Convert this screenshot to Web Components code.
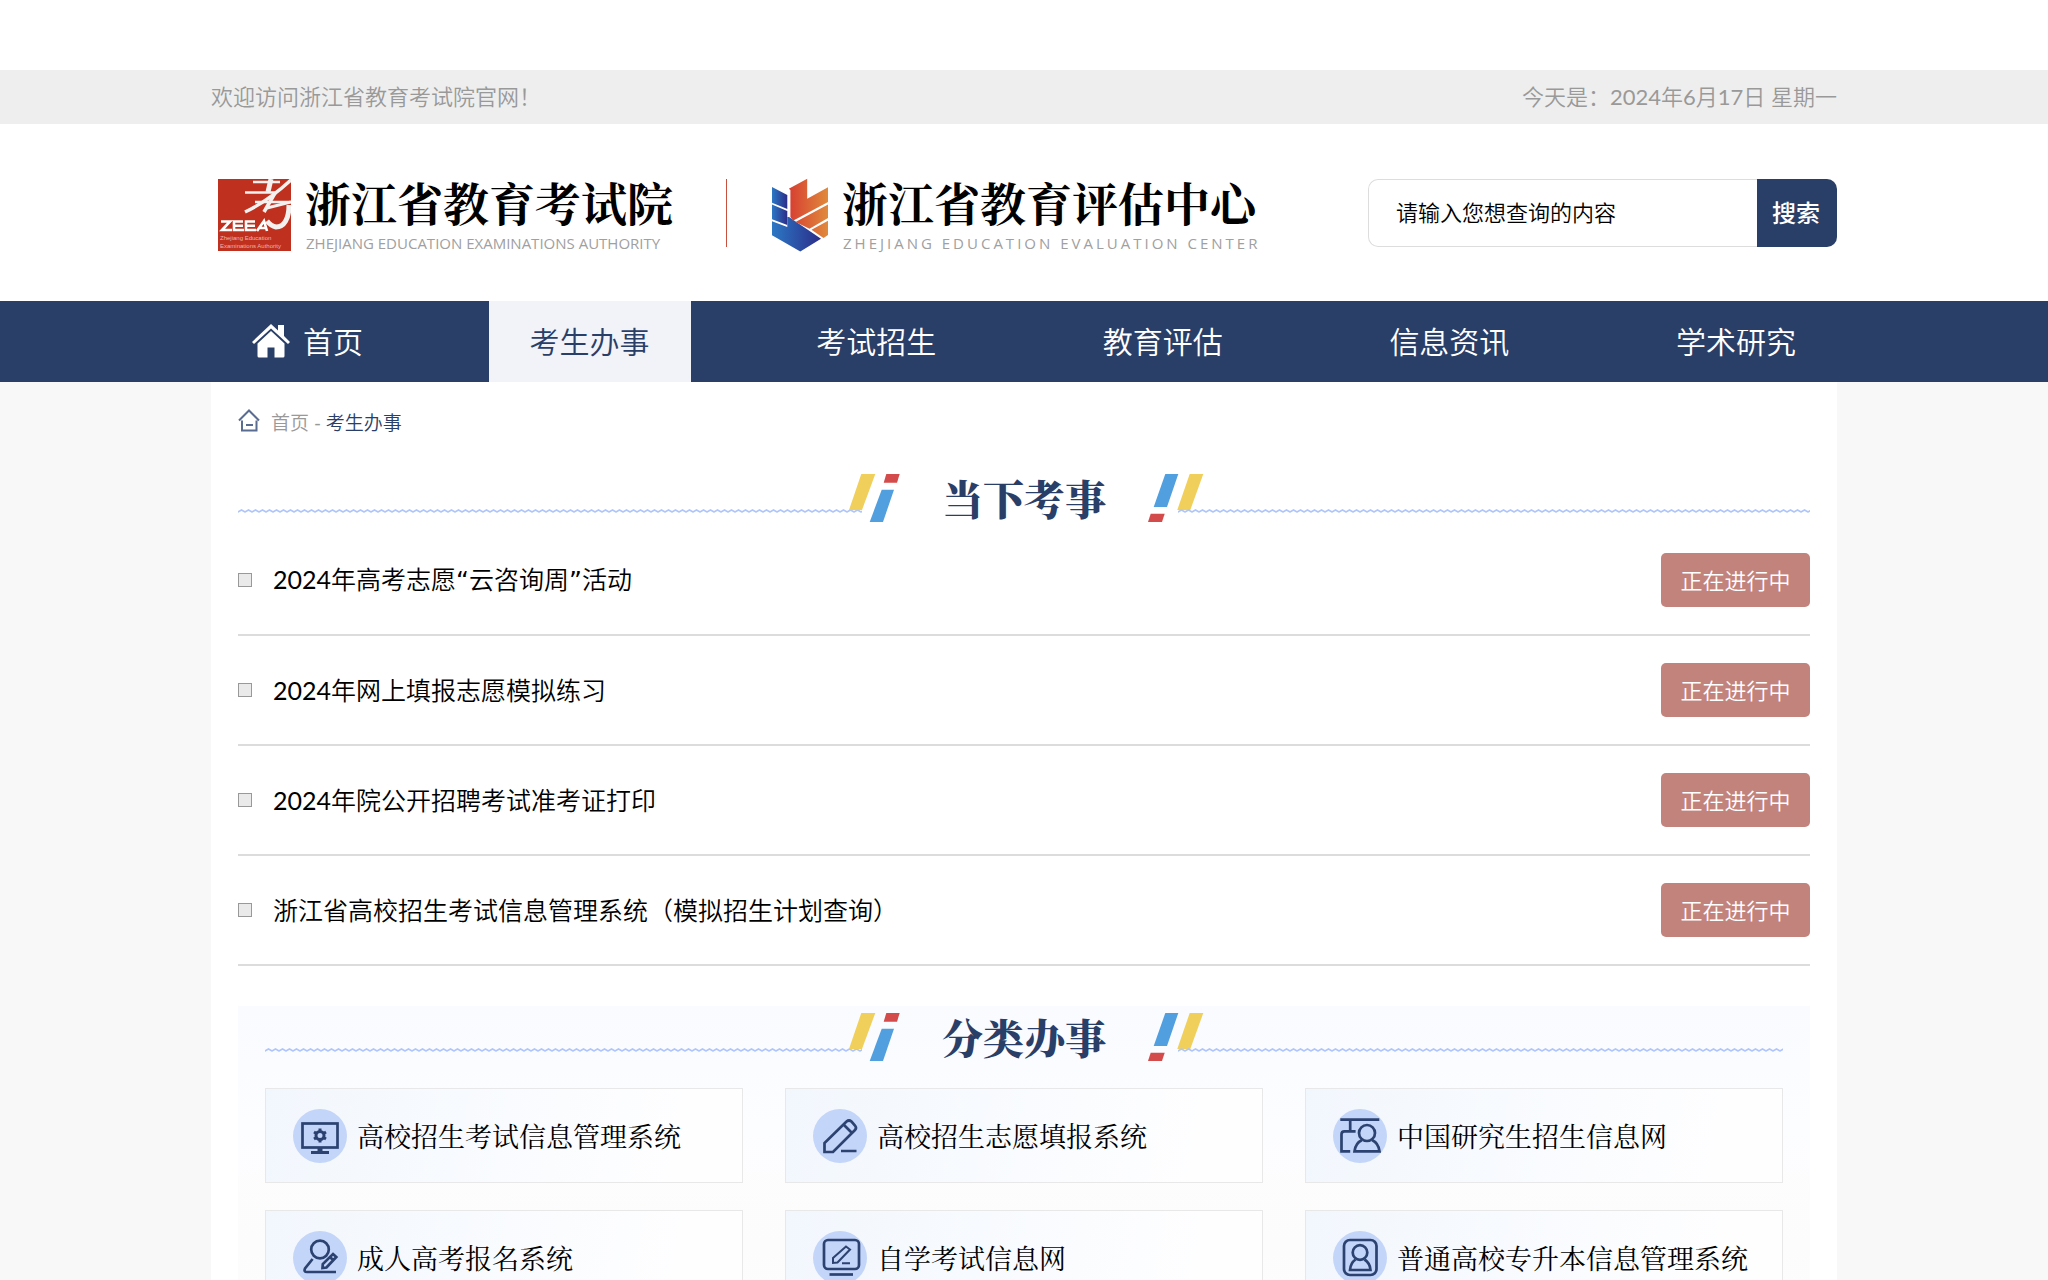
<!DOCTYPE html>
<html lang="zh-CN">
<head>
<meta charset="utf-8">
<title>浙江省教育考试院</title>
<style>
  :root {
    --navy: #2a3f68;
    --wrap: 1626px;
    --sans: Lato, "Noto Sans CJK SC DemiLight", "Noto Sans CJK SC", sans-serif;
    --serif: "Noto Serif CJK SC", "Noto Serif SC", "Source Han Serif SC", "Noto Sans CJK SC", serif;
  }
  body { margin: 0; padding-top: 70px; background: #fff; font-family: var(--sans); color: #000; }
  .quote { font-family: "DejaVu Sans", sans-serif; }
</style>
</head>
<body>
<site-topbar>
  <span>欢迎访问浙江省教育考试院官网！</span>
  <span slot="date">今天是：2024年6月17日 星期一</span>
</site-topbar>
<site-header></site-header>
<site-nav></site-nav>
<page-shell>
  <bread-crumb></bread-crumb>
  <section-title>当下考事</section-title>
  <exam-list>
    <exam-row>2024年高考志愿<span class="quote">“</span>云咨询周<span class="quote">”</span>活动</exam-row>
    <exam-row>2024年网上填报志愿模拟练习</exam-row>
    <exam-row>2024年院公开招聘考试准考证打印</exam-row>
    <exam-row>浙江省高校招生考试信息管理系统（模拟招生计划查询）</exam-row>
  </exam-list>
  <service-panel>
    <section-title slot="title">分类办事</section-title>
    <service-card icon="monitor">高校招生考试信息管理系统</service-card>
    <service-card icon="pencil">高校招生志愿填报系统</service-card>
    <service-card icon="people">中国研究生招生信息网</service-card>
    <service-card icon="signup">成人高考报名系统</service-card>
    <service-card icon="study">自学考试信息网</service-card>
    <service-card icon="badge">普通高校专升本信息管理系统</service-card>
  </service-panel>
</page-shell>

<script>
  const define = (name, html, setup) => {
    const tpl = document.createElement('template');
    tpl.innerHTML = html;
    customElements.define(name, class extends HTMLElement {
      constructor() {
        super();
        this.attachShadow({ mode: 'open' }).appendChild(tpl.content.cloneNode(true));
      }
      connectedCallback() { if (setup) setup(this, this.shadowRoot); }
    });
  };

  define('site-topbar', `
    <style>
      :host { display: block; background: #eee; color: #999; font: 22px/54px var(--sans); }
      div { max-width: var(--wrap); margin: 0 auto; display: flex; justify-content: space-between; }
    </style>
    <div><slot></slot><slot name="date"></slot></div>`);

  define('org-logo', `
    <style>
      :host { display: flex; align-items: center; gap: 14px; }
      .name { display: flex; flex-direction: column; padding-bottom: 4px; font: 700 46px/60px var(--serif); white-space: nowrap; }
      .en { font: 400 15px/24px "Open Sans", sans-serif; color: #a0a0a0; padding-left: 1px; }
      :host([wide]) .en { letter-spacing: 3px; }
    </style>
    <slot name="mark"></slot>
    <div class="name"><slot></slot><span class="en"><slot name="en"></slot></span></div>`);

  define('search-box', `
    <style>
      :host { display: block; }
      form { display: flex; height: 68px; width: 469px; margin: 0; }
      input { flex: 1; min-width: 0; box-sizing: border-box; border: 1px solid #ddd; border-right: 0; border-radius: 10px 0 0 10px;
        padding: 0 27px 2px; font: 22px var(--sans); outline: 0; background: #fff; }
      input::placeholder { color: #000; opacity: 1; }
      button { width: 80px; border: 0; border-radius: 0 10px 10px 0; background: var(--navy); color: #fff; padding: 0 2px 4px 0;
        font: 500 24px "Noto Sans CJK SC", sans-serif; }
    </style>
    <form><input type="text" aria-label="搜索内容" placeholder="请输入您想查询的内容"><button type="button">搜索</button></form>`);

  define('site-header', `
    <style>
      :host { display: block; }
      .wrap { max-width: var(--wrap); margin: 0 auto; height: 177px; display: flex; align-items: flex-start; padding-top: 47px; box-sizing: border-box; }
      .logos { display: flex; align-items: center; flex: 1; padding-left: 7px; }
      .logos i { width: 1px; height: 68px; background: #c8503f; margin: 0 45px 4px 53px; }
      search-box { margin-top: 8px; }
      svg { display: block; flex: none; }
    </style>
    <div class="wrap">
      <div class="logos">
        <org-logo>
          <svg slot="mark" width="73" height="72" viewBox="0 0 73 72">
            <defs><clipPath id="c"><rect width="73" height="72"/></clipPath></defs>
            <rect width="73" height="72" fill="#c0301f"/>
            <g clip-path="url(#c)" fill="none" stroke="#f3f1ef">
              <path d="M35 3H62M27 13.500H58M37 23H73" stroke-width="2.400"/>
              <path d="M53 0L50 13" stroke-width="5"/>
              <path d="M74 0C60 13 46 24 27 33" stroke-width="3.400"/>
              <path d="M57 14L46 33" stroke-width="3.600"/>
              <path d="M49 29L73 23" stroke-width="3"/>
              <path d="M71 26C71 40 66 48 58 48Q53 47 49 42" stroke-width="5"/>
            </g>
            <g fill="none" stroke="#fff" stroke-width="2.600">
              <path d="M3 42.500H12L4 51H14M25 42.500H16V51H26M16 46.700H25M37 42.500H28V51H38M28 46.700H37"/>
              <path d="M39 52L46 42L49 52M42 49H48"/>
            </g>
            <text x="2" y="61" font-family="Liberation Sans" font-size="6" fill="#eeb4a8">Zhejiang Education</text>
            <text x="2" y="69" font-family="Liberation Sans" font-size="6" fill="#eeb4a8">Examinations Authority</text>
          </svg>
          浙江省教育考试院<span slot="en">ZHEJIANG EDUCATION EXAMINATIONS AUTHORITY</span>
        </org-logo>
        <i></i>
        <org-logo wide>
          <svg slot="mark" width="56" height="74" viewBox="0 0 56 74">
            <defs>
              <linearGradient id="b"><stop offset="0" stop-color="#2b78c5"/><stop offset="1" stop-color="#2c2d88"/></linearGradient>
              <linearGradient id="o"><stop offset="0" stop-color="#d73e31"/><stop offset="1" stop-color="#e08a3c"/></linearGradient>
            </defs>
            <path fill="url(#b)" d="M0 9L15.300 17V31L0 24.700ZM0 26.500L15.300 33V47L0 41.300Z"/>
            <path fill="url(#b)" d="M0 43.300L15.300 49V39H17L49 60.700L28.300 73.500L0 57.300Z"/>
            <path fill="url(#o)" d="M16.800 10.700L35.200 .7V20.700L56 9.300V24L21 42.700L18.400 39V12ZM56 26.500V40L37.500 50.700L23.500 44ZM56 42.700V57L51.500 60L39.500 51.700Z"/>
          </svg>
          浙江省教育评估中心<span slot="en">ZHEJIANG EDUCATION EVALUATION CENTER</span>
        </org-logo>
      </div>
      <search-box></search-box>
    </div>`);

  define('site-nav', `
    <style>
      :host { display: block; background: var(--navy); }
      nav { max-width: var(--wrap); margin: 0 auto; display: flex; justify-content: space-between; }
      a { display: flex; align-items: center; gap: 13px; height: 81px; box-sizing: border-box; padding: 0 41px 2px;
        font: 30px/40px var(--sans); color: #fff; text-decoration: none; }
      a.on { background: #f2f3f9; color: var(--navy); }
      svg { display: block; }
    </style>
    <nav>
      <a href="#"><svg width="38" height="34" viewBox="0 0 38 34" fill="#fff">
        <path d="M19 0L26 6.500V1H32V12L38 18L36 20L19 4.500L2 20L0 18Z"/>
        <path d="M19 7L32.500 19.500V32Q32.500 33.500 31 33.500H22.500V23.500H15.500V33.500H7Q5.500 33.500 5.500 32V19.500Z"/></svg>首页</a>
      <a href="#" class="on">考生办事</a>
      <a href="#">考试招生</a>
      <a href="#">教育评估</a>
      <a href="#">信息资讯</a>
      <a href="#">学术研究</a>
    </nav>`);

  define('page-shell', `
    <style>
      :host { display: block; background: #f8f8f8; }
      main { max-width: var(--wrap); margin: 0 auto; box-sizing: border-box; padding: 27px; background: #fff; }
    </style>
    <main><slot></slot></main>`);

  define('bread-crumb', `
    <style>
      :host { display: flex; align-items: flex-start; gap: 11px; height: 28px; margin-bottom: 37px; font-size: 19px; line-height: 28px; color: #999; }
      a { color: inherit; text-decoration: none; }
      b { font-weight: 400; color: var(--navy); }
      svg { display: block; }
    </style>
    <svg width="22" height="23" viewBox="0 0 22 23" fill="none" stroke="#5a6c91" stroke-width="2">
      <path d="M1 11.500L11 1.500L21 11.500M4 11.500V21.500H18.500V11.500M8 16H15"/></svg>
    <span><a href="#">首页</a> - <b>考生办事</b></span>`);

  define('section-title', `
    <style>
      :host { display: flex; align-items: flex-start; height: 48px; }
      h2 { margin: 0 42px; font: 900 41px/48px var(--serif); color: var(--navy); white-space: nowrap; }
      svg { display: block; flex: none; }
      .line { flex: 1 1 0; min-width: 0; height: 4px; margin-top: 35px; }
      .l { margin-right: -13px; }
      .r { margin-left: -26px; flex-basis: 8px; }
    </style>
    <svg class="line l"><defs><pattern id="z" width="7" height="4" patternUnits="userSpaceOnUse">
      <path d="M-1 3.200L0 3L3.500 1L7 3L8 3.200" fill="none" stroke="#afc6fb" stroke-width="1.600"/></pattern></defs>
      <rect width="100%" height="4" fill="url(#z)"/></svg>
    <svg width="51" height="48" viewBox="0 0 51 48">
      <path fill="#f0cf5b" d="M12.300 0H26.300L13 36H0Z"/><path fill="#d34c4b" d="M37.300 0H50.700L48 8.700H34.700Z"/>
      <path fill="#519fdf" d="M32.700 15.700H45L34 48H20.700Z"/></svg>
    <h2><slot></slot></h2>
    <svg width="56" height="48" viewBox="0 0 56 48">
      <path fill="#519fdf" d="M17.300 0H30.300L19 33H5.700Z"/><path fill="#d34c4b" d="M2.700 39.700H16.700L14 48H0Z"/>
      <path fill="#f0cf5b" d="M41.700 0H55.300L42.300 36H29.300Z"/></svg>
    <svg class="line r"><defs><pattern id="z" width="7" height="4" patternUnits="userSpaceOnUse">
      <path d="M-1 3.200L0 3L3.500 1L7 3L8 3.200" fill="none" stroke="#afc6fb" stroke-width="1.600"/></pattern></defs>
      <rect width="100%" height="4" fill="url(#z)"/></svg>`);

  define('exam-list', `
    <style>:host { display: flex; flex-direction: column; margin-top: 4px; }</style>
    <slot></slot>`);

  define('exam-row', `
    <style>
      :host { display: flex; align-items: center; padding: 27px 0; border-bottom: 2px solid #dcdcdc; }
      i { width: 12px; height: 12px; border: 1px solid #999; background: #eaeaea; margin-right: 21px; }
      a { flex: 1; font-size: 25px; line-height: 36px; color: #000; text-decoration: none; }
      button { width: 149px; height: 54px; border: 0; border-radius: 5px; padding: 0 0 2px; background: #c3837d; color: #fff; font: 22px var(--sans); }
    </style>
    <i></i><a href="#"><slot></slot></a><button type="button">正在进行中</button>`);

  define('service-panel', `
    <style>
      :host { display: block; margin-top: 40px; padding: 7px 27px 27px; background: linear-gradient(#f9fbff, #fcfdff 120px, #fcfcfc 240px, #fdfdfd); }
      .grid { display: grid; grid-template-columns: repeat(3, 1fr); gap: 27px 42px; margin-top: 27px; }
    </style>
    <slot name="title"></slot>
    <div class="grid"><slot></slot></div>`);

  const ICONS = {
    monitor: `<rect x="9.500" y="14.500" width="35" height="24"/><path d="M18 43.500H36" stroke-width="3"/><path d="M27 39V43" stroke-width="5"/>
      <circle cx="27" cy="26.500" r="4" stroke-width="3"/><path d="M27 19.500V22M27 31V33.500M21 23L23 24.200M31 28.800L33 30M21 30L23 28.800M31 24.200L33 23" stroke-width="3"/>`,
    pencil: `<path d="M11.500 43V34L33.500 12.500Q36 10.500 38.500 12.500L42 16.500Q44 19 42 21L20 43ZM30.500 15.500L38.500 23.500M28 42H43.500"/>`,
    people: `<path d="M7.300 10.700H46.300M17.200 11V22M22.600 22.300H11.500Q8.500 22.300 8.500 25.300V42.300H17.200"/><circle cx="34" cy="24" r="8"/>
      <path d="M29 31Q22.500 34 21.500 42.300H46.500Q45.500 34 39 31"/>`,
    signup: `<circle cx="27" cy="18.500" r="8.800"/><path d="M19.600 28L12 37.500Q10.500 41 14 41H43"/><path d="M40 23L43.300 26L33.500 36.500L29.500 37L29.800 33ZM37 26L40 29"/>`,
    study: `<rect x="11" y="9" width="35" height="29" rx="4"/><path d="M16.500 43.500H40"/><path d="M20 32V27L33 15.500L37 18.500L24.500 31.500ZM29 32.300H37" stroke-width="2"/>`,
    badge: `<rect x="11" y="9" width="32.500" height="35" rx="6"/><circle cx="27" cy="21.500" r="7.300"/><path d="M22.500 28.500Q17.500 32 17 39H37.500Q37 32 31.500 28.500"/>`
  };

  define('service-card', `
    <style>
      :host { display: block; }
      a { display: flex; align-items: center; gap: 10px; height: 95px; box-sizing: border-box; padding: 0 27px; border: 1px solid #e8e8e8;
        background: linear-gradient(100deg, #f2f7fd, #fefeff 85%); color: #000; text-decoration: none; font: 27px/40px var(--serif); white-space: nowrap; }
      svg { display: block; flex: none; }
    </style>
    <a href="#"><svg width="54" height="54" viewBox="0 0 54 54"><circle cx="27" cy="27" r="27" fill="#c3d5f8"/>
      <g fill="none" stroke="#2c4270" stroke-width="2.700"></g></svg><span><slot></slot></span></a>`,
    (el, root) => { root.querySelector('g').innerHTML = ICONS[el.getAttribute('icon')]; });
</script>
</body>
</html>
